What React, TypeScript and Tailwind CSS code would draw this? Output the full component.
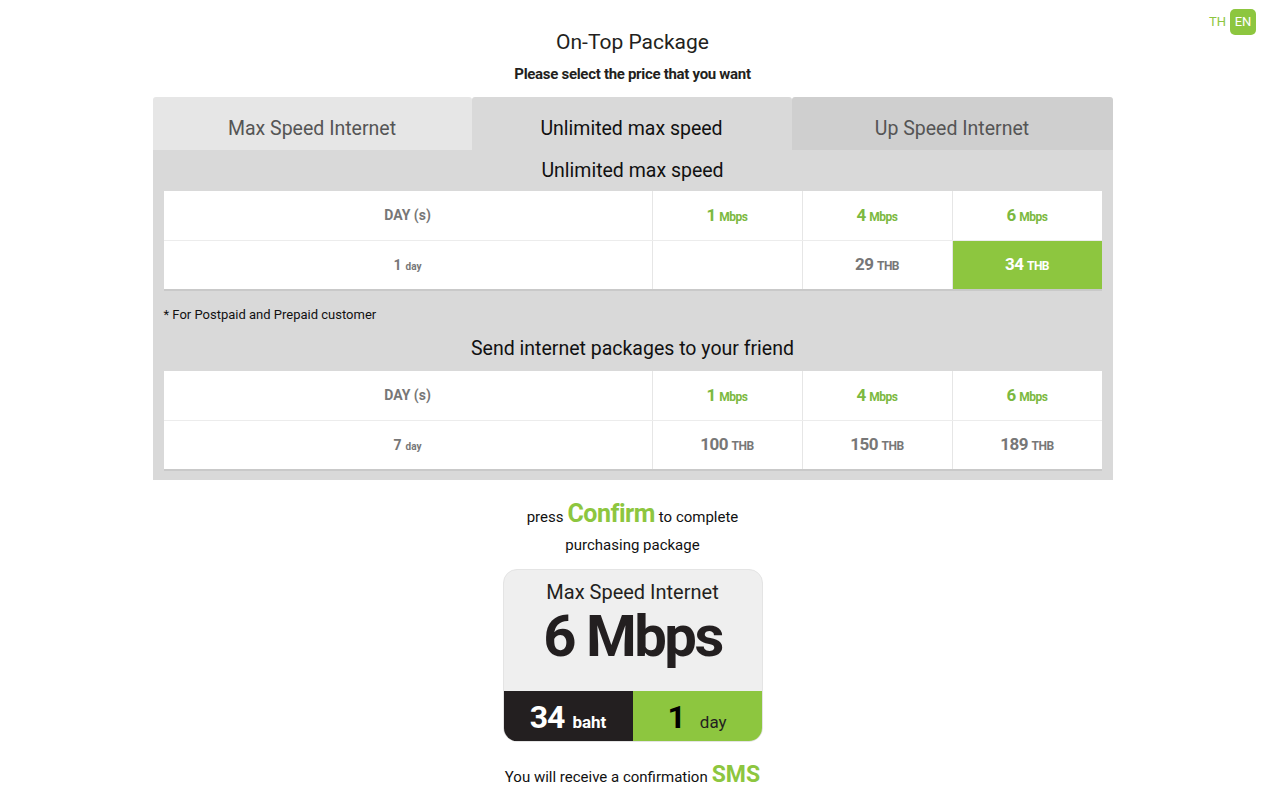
import React from "react";

const F = { fontFamily: 'Roboto, "Liberation Sans", Arial, sans-serif' };

function Mbps({ n }: { n: string }) {
  return (
    <span className="font-bold text-[#7cb940] tracking-[-0.5px]">
      <span className="text-[17px]">{n}</span> <span className="text-[12px]">Mbps</span>
    </span>
  );
}

function Thb({ n, white }: { n: string; white?: boolean }) {
  return (
    <span className={`font-bold tracking-[-0.5px] ${white ? "text-white" : "text-[#777]"}`}>
      <span className="text-[17px]">{n}</span> <span className="text-[12px]">THB</span>
    </span>
  );
}

function Day({ n }: { n: string }) {
  return (
    <span className="font-bold text-[#777]">
      <span className="text-[14px]">{n}</span> <span className="text-[10px]">day</span>
    </span>
  );
}

function Table({ rows }: { rows: React.ReactNode[][] }) {
  return (
    <div className="mx-[11px] bg-white border-b-2 border-[#c9c9c9]">
      {rows.map((r, i) => (
        <div key={i} className={`grid grid-cols-[488px_150px_150px_150px] h-[49px] ${i > 0 ? "border-t border-[#ececec]" : ""}`}>
          {r.map((c, j) => (
            <div key={j} className={`flex items-center justify-center ${j > 0 ? "border-l border-[#e6e6e6]" : ""}`}>{c}</div>
          ))}
        </div>
      ))}
    </div>
  );
}

export default function App() {
  return (
    <div className="relative w-full min-h-[800px] bg-white text-[#231f20]" style={F}>
      <div className="absolute right-[9px] top-[9px] flex items-center gap-[4px] text-[13px]">
        <span className="text-[#8dc63f]">TH</span>
        <span className="bg-[#8dc63f] text-white rounded-[5px] w-[26px] h-[26px] flex items-center justify-center">EN</span>
      </div>
      <div className="flex flex-col items-center pt-[28px]">
        <div className="text-[21px] leading-[28px]">On-Top Package</div>
        <div className="text-[15px] font-bold leading-[18px] mt-[9px] tracking-[-0.3px]">Please select the price that you want</div>

        <div className="w-[960px] mt-[14px]">
          <div className="flex h-[53px] text-[19.5px]">
            <div className="w-[319px] bg-[#e6e6e6] text-[#555] rounded-t-[3px] flex items-center justify-center pt-[10px]">Max Speed Internet</div>
            <div className="w-[320px] bg-[#d9d9d9] text-[#111] rounded-t-[3px] flex items-center justify-center pt-[10px]">Unlimited max speed</div>
            <div className="w-[321px] bg-[#cfcfcf] text-[#555] rounded-t-[3px] flex items-center justify-center pt-[10px]">Up Speed Internet</div>
          </div>
          <div className="bg-[#d9d9d9] pb-[9px]">
            <div className="h-[41px] flex items-center justify-center text-[19.5px] text-[#111]">Unlimited max speed</div>
            <Table
              rows={[
                [<span className="font-bold text-[14px] text-[#777]">DAY (s)</span>, <Mbps n="1" />, <Mbps n="4" />, <Mbps n="6" />],
                [<Day n="1" />, "", <Thb n="29" />, <div className="w-full h-full bg-[#8dc63f] flex items-center justify-center"><Thb n="34" white /></div>],
              ]}
            />
            <div className="text-[13px] text-[#111] px-[11px] pt-[15px] leading-[18px]">* For Postpaid and Prepaid customer</div>
            <div className="h-[47px] flex items-center justify-center text-[19.5px] text-[#111] pt-[2px]">Send internet packages to your friend</div>
            <Table
              rows={[
                [<span className="font-bold text-[14px] text-[#777]">DAY (s)</span>, <Mbps n="1" />, <Mbps n="4" />, <Mbps n="6" />],
                [<Day n="7" />, <Thb n="100" />, <Thb n="150" />, <Thb n="189" />],
              ]}
            />
          </div>
        </div>

        <div className="mt-[19px] text-[15px] text-[#111] flex items-baseline gap-[4px] leading-[30px]">
          <span>press</span>
          <span className="text-[25px] font-bold text-[#8dc63f] tracking-[-0.5px]">Confirm</span>
          <span>to complete</span>
        </div>
        <div className="text-[15px] text-[#111] leading-[20px] mt-[3px]">purchasing package</div>

        <div className="mt-[14px] w-[260px] rounded-[14px] overflow-hidden bg-[#efefef] border border-[#e4e4e4]">
          <div className="h-[121px] flex flex-col items-center">
            <div className="text-[20px] leading-[26px] mt-[9px]">Max Speed Internet</div>
            <div className="text-[58px] font-bold leading-[62px] tracking-[-2.5px]">6 Mbps</div>
          </div>
          <div className="flex h-[50px]">
            <div className="w-1/2 bg-[#231f20] text-white flex items-baseline justify-center pt-[6px] gap-[8px]">
              <span className="text-[32px] font-bold leading-[40px] tracking-[-1px]">34</span>
              <span className="text-[17px] font-bold">baht</span>
            </div>
            <div className="w-1/2 bg-[#8dc63f] text-black flex items-baseline justify-center pt-[6px] gap-[14px]">
              <span className="text-[32px] font-bold leading-[40px]">1</span>
              <span className="text-[17px] text-[#231f20]">day</span>
            </div>
          </div>
        </div>

        <div className="mt-[16px] flex items-baseline gap-[4px] text-[15px] text-[#111]">
          <span>You will receive a confirmation</span>
          <span className="text-[23px] font-bold text-[#8dc63f]">SMS</span>
        </div>
      </div>
    </div>
  );
}
